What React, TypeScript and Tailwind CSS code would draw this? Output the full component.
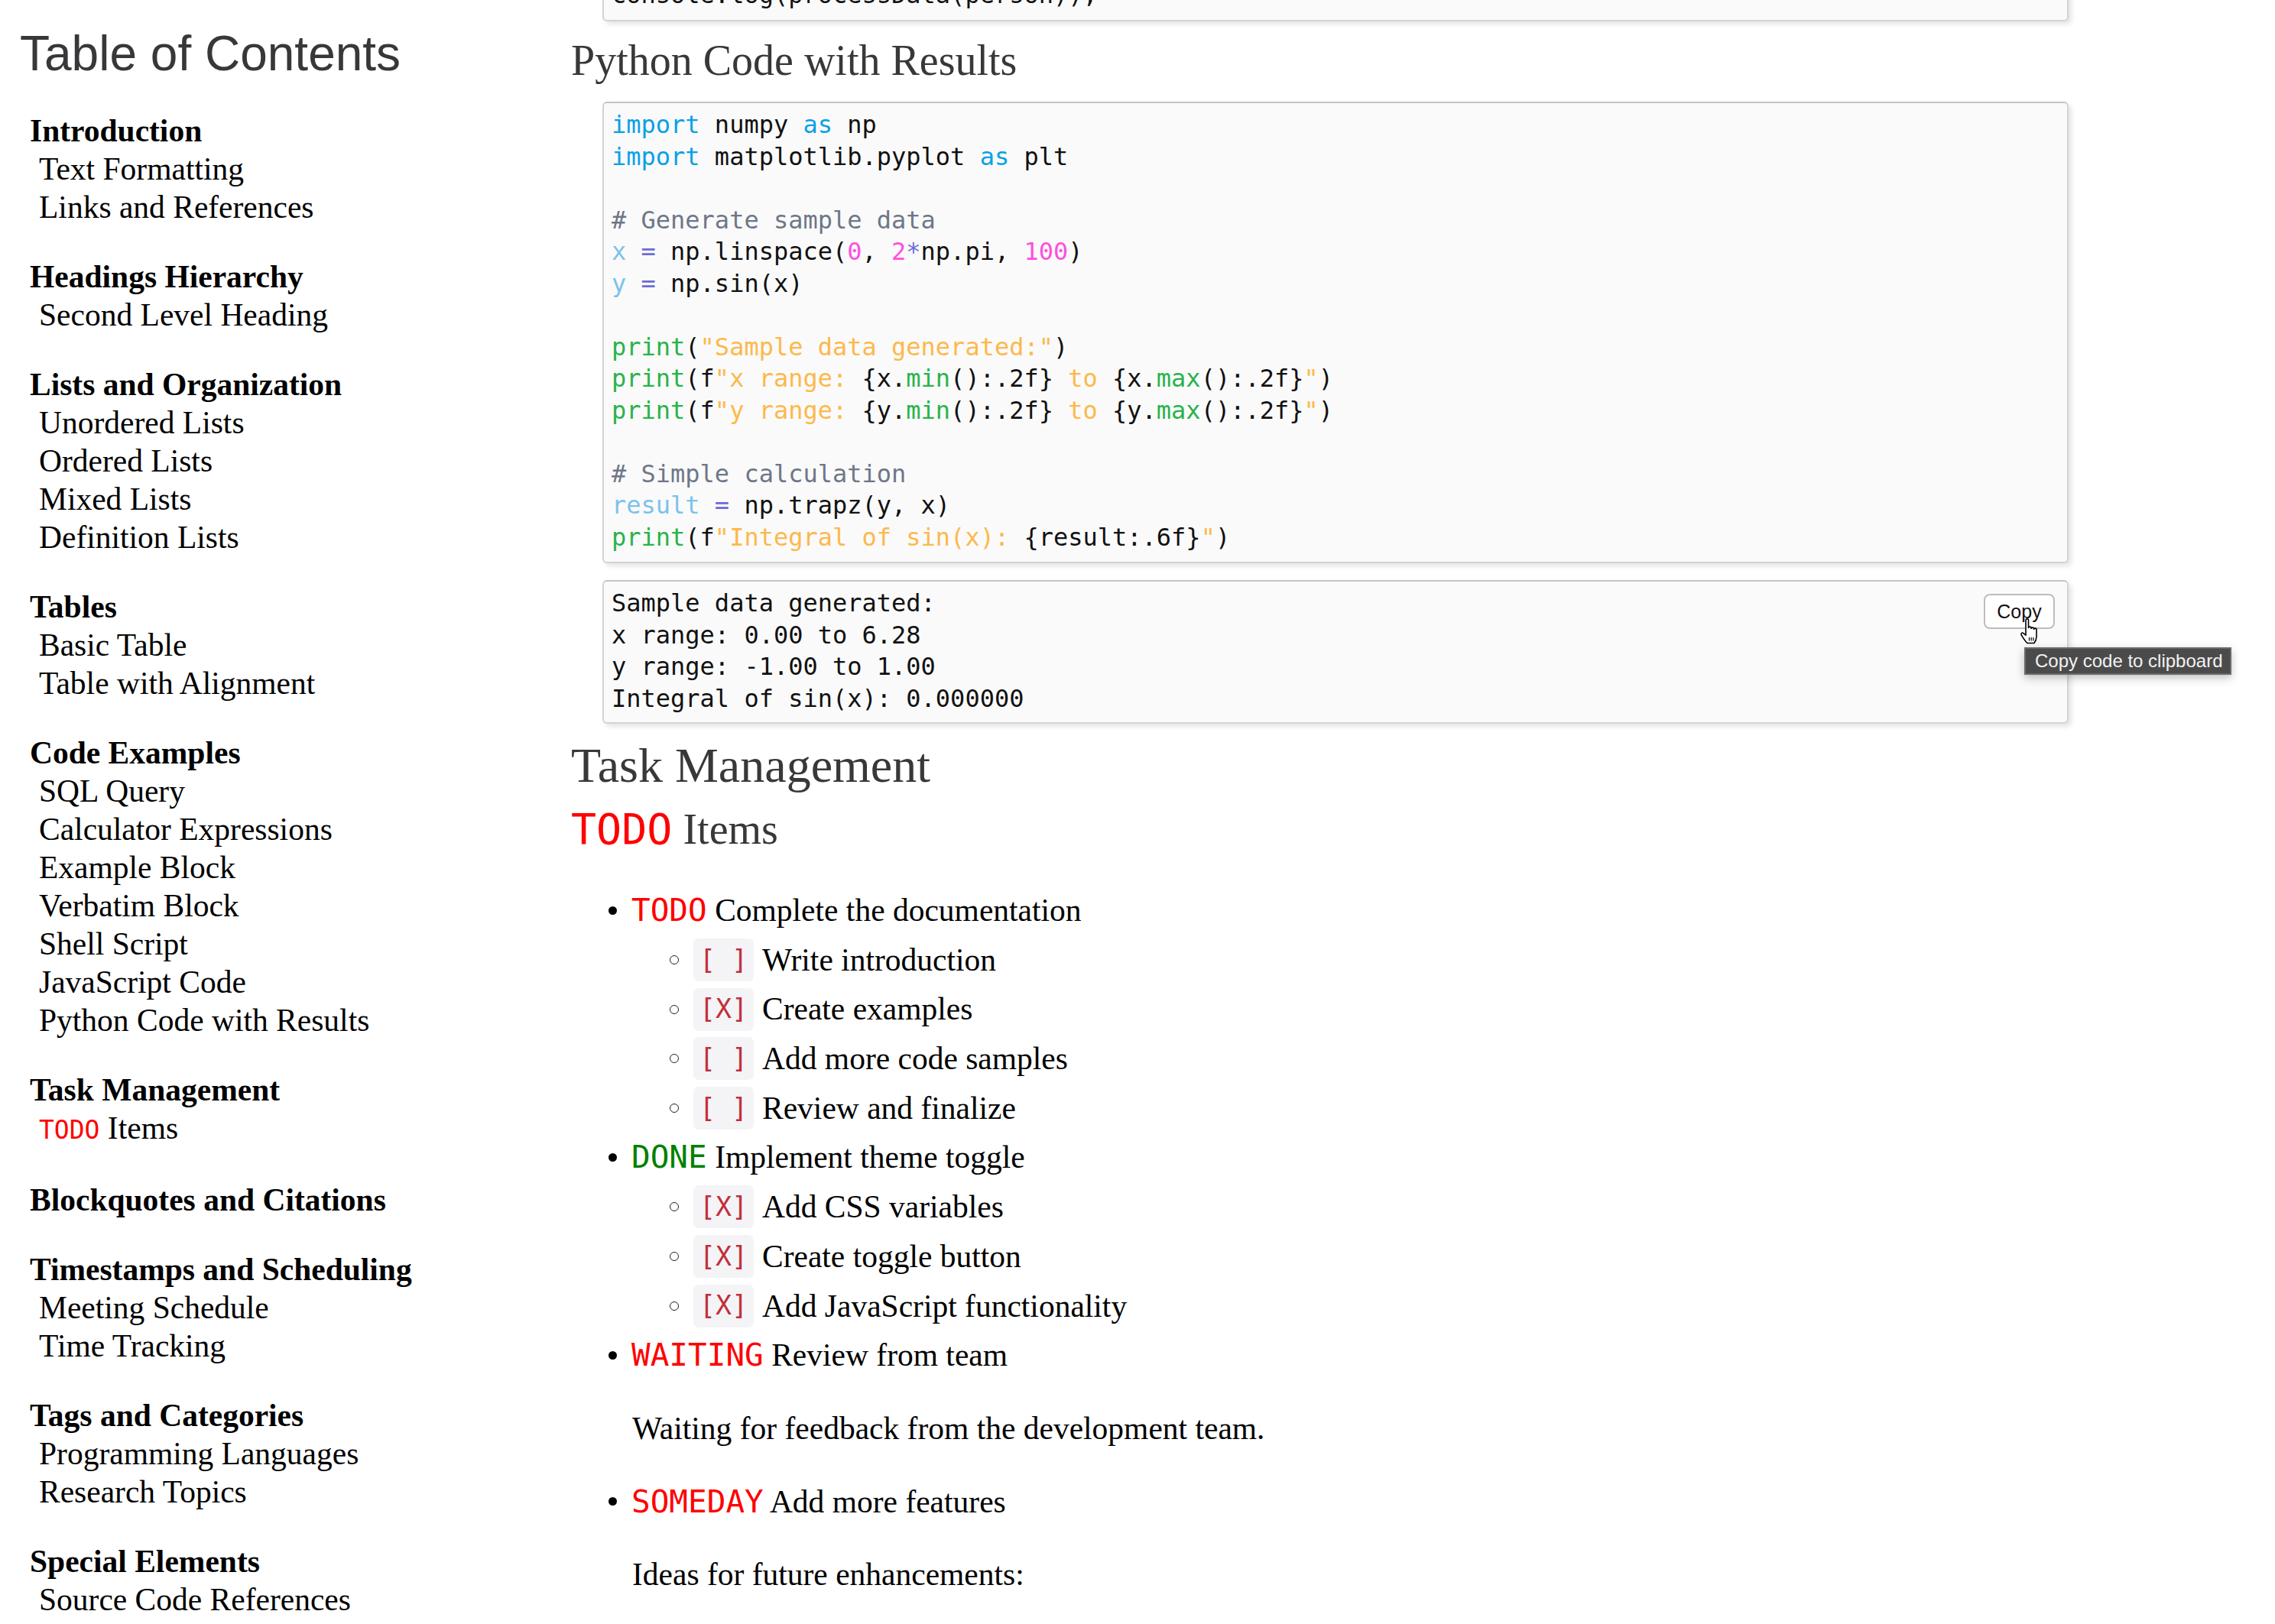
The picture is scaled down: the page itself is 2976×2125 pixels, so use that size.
import React from "react";

type Tok = [string, string];

const K = "text-[#0aa1e6]";
const CM = "text-[#6e7788]";
const V = "text-[#7cc3ea]";
const O = "text-[#6c6cd6]";
const N = "text-[#ff4fe0]";
const F = "text-[#28b44a]";
const S = "text-[#fcb94b]";
const D = "text-[#111111]";

const code: Tok[][] = [
  [["import", K], [" numpy ", D], ["as", K], [" np", D]],
  [["import", K], [" matplotlib.pyplot ", D], ["as", K], [" plt", D]],
  [],
  [["# Generate sample data", CM]],
  [["x", V], [" ", D], ["=", O], [" np.linspace(", D], ["0", N], [", ", D], ["2", N], ["*", O], ["np.pi, ", D], ["100", N], [")", D]],
  [["y", V], [" ", D], ["=", O], [" np.sin(x)", D]],
  [],
  [["print", F], ["(", D], ['"Sample data generated:"', S], [")", D]],
  [["print", F], ["(f", D], ['"x range: ', S], ["{x.", D], ["min", F], ["():.2f} ", D], ["to ", S], ["{x.", D], ["max", F], ["():.2f}", D], ['"', S], [")", D]],
  [["print", F], ["(f", D], ['"y range: ', S], ["{y.", D], ["min", F], ["():.2f} ", D], ["to ", S], ["{y.", D], ["max", F], ["():.2f}", D], ['"', S], [")", D]],
  [],
  [["# Simple calculation", CM]],
  [["result", V], [" ", D], ["=", O], [" np.trapz(y, x)", D]],
  [["print", F], ["(f", D], ['"Integral of sin(x): ', S], ["{result:.6f}", D], ['"', S], [")", D]],
];

const output = [
  "Sample data generated:",
  "x range: 0.00 to 6.28",
  "y range: -1.00 to 1.00",
  "Integral of sin(x): 0.000000",
];

type TocGroup = { title: React.ReactNode; items: React.ReactNode[] };

const toc: TocGroup[] = [
  { title: "Introduction", items: ["Text Formatting", "Links and References"] },
  { title: "Headings Hierarchy", items: ["Second Level Heading"] },
  { title: "Lists and Organization", items: ["Unordered Lists", "Ordered Lists", "Mixed Lists", "Definition Lists"] },
  { title: "Tables", items: ["Basic Table", "Table with Alignment"] },
  {
    title: "Code Examples",
    items: ["SQL Query", "Calculator Expressions", "Example Block", "Verbatim Block", "Shell Script", "JavaScript Code", "Python Code with Results"],
  },
  {
    title: "Task Management",
    items: [
      <span key="todo">
        <span className="font-['DejaVu_Sans_Mono',monospace] text-[33px] text-[#ff0000]">TODO</span> Items
      </span>,
    ],
  },
  { title: "Blockquotes and Citations", items: [] },
  { title: "Timestamps and Scheduling", items: ["Meeting Schedule", "Time Tracking"] },
  { title: "Tags and Categories", items: ["Programming Languages", "Research Topics"] },
  { title: "Special Elements", items: ["Source Code References"] },
];

const mono = "font-['DejaVu_Sans_Mono',monospace]";
const preBox =
  "relative border-2 border-[#d3d3d3] border-t-[#c4c4c4] rounded-[6px] bg-[#fafafa] shadow-[4px_4px_6px_rgba(0,0,0,0.10)] mx-[41px] px-[10px]";

function Bullet() {
  return <span className="w-[11px] h-[11px] rounded-full bg-black shrink-0" />;
}

function Circle() {
  return <span className="w-[12px] h-[12px] rounded-full border-[1.5px] border-[#222222] shrink-0" />;
}

function Check({ done }: { done: boolean }) {
  return (
    <span
      className={`${mono} ml-[19px] inline-flex items-center justify-center h-[56px] w-[79px] rounded-[7px] bg-[#f4f4f6] text-[35px] leading-none text-[#c22f3c] whitespace-pre shrink-0`}
    >
      {done ? "[X]" : "[ ]"}
    </span>
  );
}

function TopRow({ kw, color, text }: { kw: string; color: string; text: string }) {
  return (
    <div className="flex items-center h-[64.7px] pl-[49px]">
      <Bullet />
      <span className="ml-[19px] whitespace-nowrap">
        <span className={`${mono} text-[41px] ${color}`}>{kw}</span> {text}
      </span>
    </div>
  );
}

function SubRow({ done, text }: { done: boolean; text: string }) {
  return (
    <div className="flex items-center h-[64.7px] pl-[129px]">
      <Circle />
      <Check done={done} />
      <span className="ml-[11px] whitespace-nowrap">{text}</span>
    </div>
  );
}

function HandCursor() {
  return (
    <svg width="32" height="36" viewBox="0 0 32 36" className="absolute left-[1850px] top-[47px]">
      <path
        d="M10 3.5 C10 1.2 13.5 1.2 13.5 3.5 L13.5 13.5 C13.5 11.6 17 11.6 17 13.5 L17 14.5 C17 12.6 20.5 12.6 20.5 14.5 L20.5 15.5 C20.5 13.6 24 13.6 24 15.5 L24 25 C24 29 22.5 31.5 21 33.5 L12 33.5 C10 31.5 7 27.5 4.2 22.8 C3.2 21 5 19.2 6.6 20.4 L10 23.2 Z"
        fill="#ffffff"
        stroke="#000000"
        strokeWidth="1.6"
        strokeLinejoin="round"
      />
      <path d="M14.5 26 L14.5 30.5 M17.2 26 L17.2 30.5 M19.9 26 L19.9 30.5" stroke="#000000" strokeWidth="1.2" />
    </svg>
  );
}

export default function App() {
  return (
    <div className="flex w-[2976px] h-[2125px] overflow-hidden bg-white font-['Liberation_Serif',serif] text-black">
      {/* Sidebar */}
      <aside className="w-[747px] shrink-0 pt-[34px]">
        <div className="pl-[26px] font-['Liberation_Sans',Arial,sans-serif] text-[64px] leading-[72px] text-[#38383a] whitespace-nowrap">
          Table of Contents
        </div>
        <nav className="mt-[40px] flex flex-col gap-[41px] text-[41.5px] leading-[50px]">
          {toc.map((g, i) => (
            <div key={i} className="flex flex-col">
              <div className="pl-[39px] font-bold whitespace-nowrap">{g.title}</div>
              {g.items.map((it, j) => (
                <div key={j} className="pl-[51px] whitespace-nowrap">
                  {it}
                </div>
              ))}
            </div>
          ))}
        </nav>
      </aside>

      {/* Main */}
      <main className="w-[2000px] shrink-0 flex flex-col">
        <div className={`${preBox} -mt-[37px] pt-[8px] pb-[11px]`}>
          <pre className={`${mono} text-[32px] leading-[41.5px] text-[#111111] whitespace-pre`}>
            console.log(processData(person));
          </pre>
        </div>

        <h3 className="mt-[19.5px] text-[56px] leading-[64px] text-[#38383a] whitespace-nowrap">Python Code with Results</h3>

        <div className={`${preBox} mt-[22px] pt-[8px] pb-[11px]`}>
          <pre className={`${mono} text-[32px] leading-[41.5px] whitespace-pre`}>
            {code.map((line, i) => (
              <div key={i} className="h-[41.5px]">
                {line.map(([t, c], j) => (
                  <span key={j} className={c}>
                    {t}
                  </span>
                ))}
              </div>
            ))}
          </pre>
        </div>

        <div className={`${preBox} mt-[22px] pt-[8px] pb-[10px]`}>
          <pre className={`${mono} text-[32px] leading-[41.5px] text-[#111111] whitespace-pre`}>
            {output.map((l, i) => (
              <div key={i} className="h-[41.5px]">
                {l}
              </div>
            ))}
          </pre>
          <button className="absolute top-[16px] right-[16px] w-[93px] h-[46px] rounded-[8px] border-2 border-[#bdbdbd] bg-white font-['Liberation_Sans',Arial,sans-serif] text-[25px] leading-none text-[#111111]">
            Copy
          </button>
          <HandCursor />
          <div className="absolute left-[1858px] top-[86px] h-[36px] w-[271px] flex items-center px-[12px] bg-[#4b4b4b] border-2 border-[#6a6a6a] shadow-[0_4px_12px_rgba(0,0,0,0.25)] font-['Liberation_Sans',Arial,sans-serif] text-[24px] leading-none text-[#f2f2f2] whitespace-nowrap">
            Copy code to clipboard
          </div>
        </div>

        <h1 className="mt-[19px] text-[64px] leading-[72px] text-[#38383a] whitespace-nowrap">Task Management</h1>
        <h2 className="mt-[15px] text-[56px] leading-[64px] text-[#38383a] whitespace-nowrap">
          <span className={`${mono} text-[55px] text-[#ff0000]`}>TODO</span> Items
        </h2>

        <div className="mt-[42px] flex flex-col text-[41.5px] leading-[64.7px]">
          <TopRow kw="TODO" color="text-[#ff0000]" text="Complete the documentation" />
          <SubRow done={false} text="Write introduction" />
          <SubRow done={true} text="Create examples" />
          <SubRow done={false} text="Add more code samples" />
          <SubRow done={false} text="Review and finalize" />
          <TopRow kw="DONE" color="text-[#008000]" text="Implement theme toggle" />
          <SubRow done={true} text="Add CSS variables" />
          <SubRow done={true} text="Create toggle button" />
          <SubRow done={true} text="Add JavaScript functionality" />
          <TopRow kw="WAITING" color="text-[#ff0000]" text="Review from team" />
          <p className="my-[31px] pl-[80px] whitespace-nowrap">Waiting for feedback from the development team.</p>
          <TopRow kw="SOMEDAY" color="text-[#ff0000]" text="Add more features" />
          <p className="my-[31px] pl-[80px] whitespace-nowrap">Ideas for future enhancements:</p>
        </div>
      </main>
    </div>
  );
}
